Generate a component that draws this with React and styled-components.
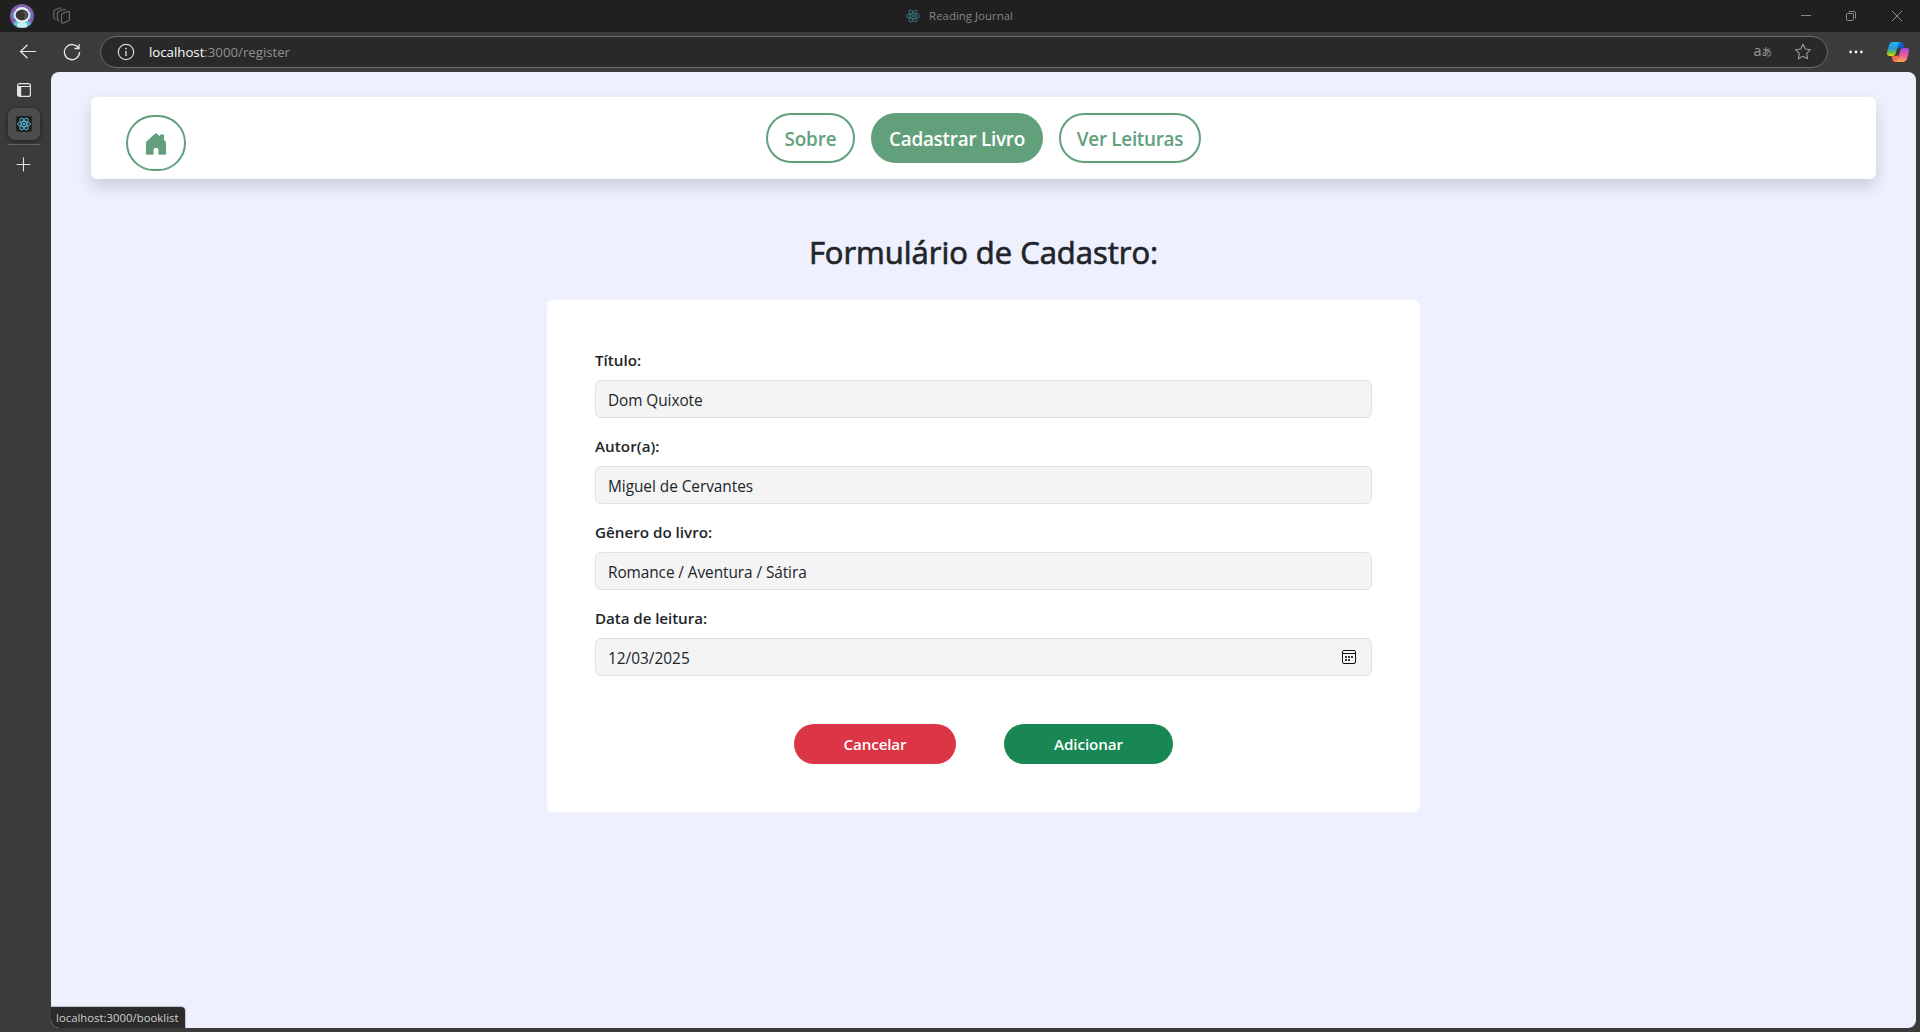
import React from "react";
import styled, { createGlobalStyle } from "styled-components";

const GlobalStyle = createGlobalStyle`
  * { box-sizing: border-box; }
  html, body { margin: 0; padding: 0; }
  body {
    font-family: "Open Sans", "Noto Sans", sans-serif;
    background: #3b3b3b;
    overflow: hidden;
  }
  svg { display: block; flex: none; }
`;

const Browser = styled.div`
  display: flex;
  flex-direction: column;
  width: 1920px;
  height: 1032px;
  background: #3b3b3b;
`;

const TitleBar = styled.header`
  display: grid;
  grid-template-columns: 1fr auto 1fr;
  align-items: center;
  height: 32px;
  background: #202020;
  flex: none;
`;

const TitleLeft = styled.div`
  display: flex;
  align-items: center;
  gap: 19px;
  padding-left: 10px;
`;

const TabTitle = styled.div`
  display: flex;
  align-items: center;
  gap: 9px;
  padding-right: 1px;
  font-size: 11.4px;
  line-height: 16px;
  letter-spacing: ${(p) => p.$spacing};
  color: #858585;
`;

const WindowControls = styled.div`
  display: flex;
  justify-content: flex-end;
  align-items: center;
  gap: 35px;
  padding-right: 17px;
`;

const Toolbar = styled.div`
  display: flex;
  align-items: center;
  height: 40px;
  flex: none;
  padding: 0 11px 0 19px;
`;

const AddressBar = styled.div`
  display: flex;
  align-items: center;
  flex: 1;
  height: 32px;
  margin: 0 21px 0 19px;
  padding: 0 15px 0 16px;
  border: 1px solid #6a6a6a;
  border-radius: 16px;
  background: #292929;
`;

const Url = styled.div`
  flex: 1;
  margin-left: 14px;
  font-size: 13.3px;
  line-height: 20px;
  letter-spacing: ${(p) => p.$spacing};
  color: #8f8f8f;
`;

const Host = styled.span`
  color: #ffffff;
`;

const Translate = styled.span`
  display: flex;
  align-items: baseline;
  margin-right: 22px;
  padding-bottom: 2px;
  font-size: 14.5px;
  line-height: 18px;
  color: #9a9a9a;
`;

const Kana = styled.span`
  font-family: "Noto Sans CJK JP", sans-serif;
  font-size: 10.5px;
  line-height: 12px;
`;

const ToolIcon = styled.div`
  margin-left: ${(p) => p.$left || "0"};
`;

const Body = styled.div`
  display: flex;
  flex: 1;
  min-height: 0;
  padding: 0 4px 4px 0;
`;

const SideTabs = styled.aside`
  display: flex;
  flex-direction: column;
  align-items: center;
  width: 51px;
  padding: 11px 4px 0 0;
`;

const ActiveTab = styled.div`
  display: flex;
  align-items: center;
  justify-content: center;
  width: 32px;
  height: 32px;
  margin: 11px 0 0 1px;
  border-radius: 7px;
  background: #4c4c4c;
  box-shadow: 0 1px 4px rgba(0, 0, 0, 0.55);
`;

const Favicon = styled.div`
  display: flex;
  align-items: center;
  justify-content: center;
  width: 16px;
  height: 16px;
  border-radius: 2px;
  background: #222222;
`;

const TabDivider = styled.div`
  width: 32px;
  height: 1px;
  margin: 4px 0 12px 1px;
  background: #5f5f5f;
`;

const Page = styled.main`
  position: relative;
  flex: 1;
  padding: 25px 40px 0;
  border-radius: 8px;
  background: #eef0fe;
  overflow: hidden;
`;

const NavCard = styled.nav`
  display: grid;
  grid-template-columns: 1fr auto 1fr;
  height: 82px;
  padding: 16px 35px 0;
  border-radius: 6px;
  background: #ffffff;
  box-shadow: 0 8px 16px rgba(0, 0, 0, 0.15);
`;

const HomeButton = styled.button`
  display: flex;
  justify-content: center;
  width: 60px;
  height: 56px;
  margin-top: 2px;
  padding: 16px 0 0;
  border: 2px solid #62a07c;
  border-radius: 28px;
  background: #ffffff;
`;

const NavLinks = styled.div`
  display: flex;
  gap: 16px;
`;

const NavLink = styled.a`
  display: flex;
  align-items: center;
  justify-content: center;
  width: ${(p) => p.$width};
  height: 50px;
  padding-top: 2px;
  border: 2px solid #62a07c;
  border-radius: 25px;
  background: ${(p) => (p.$active ? "#62a07c" : "#ffffff")};
  color: ${(p) => (p.$active ? "#ffffff" : "#62a07c")};
  font-size: 18.9px;
  font-weight: 600;
  line-height: 30px;
  letter-spacing: ${(p) => p.$spacing};
  white-space: nowrap;
`;

const Heading = styled.h2`
  margin: 54px 0 0;
  font-size: 31px;
  font-weight: 400;
  line-height: 38px;
  letter-spacing: ${(p) => p.$spacing};
  text-align: center;
  color: #212529;
  -webkit-text-stroke: 0.7px #212529;
`;

const FormCard = styled.form`
  display: flex;
  flex-direction: column;
  width: 873px;
  height: 512px;
  margin: 29px auto 0;
  padding: 48px;
  border-radius: 6px;
  background: #ffffff;
`;

const Field = styled.div`
  display: flex;
  flex-direction: column;
  gap: 8px;
  margin-bottom: 16px;
`;

const Label = styled.label`
  font-size: 15.2px;
  font-weight: 600;
  line-height: 24px;
  letter-spacing: ${(p) => p.$spacing};
  color: #212529;
`;

const InputBox = styled.div`
  display: flex;
  align-items: center;
  height: 38px;
  padding: 0 15px 0 12px;
  border: 1px solid #dee2e6;
  border-radius: 6px;
  background: #f4f4f4;
`;

const Input = styled.input`
  flex: 1;
  min-width: 0;
  height: 26px;
  padding: 2px 0 0;
  border: 0;
  outline: 0;
  background: transparent;
  font-family: inherit;
  font-size: 15.4px;
  line-height: 24px;
  letter-spacing: ${(p) => p.$spacing};
  color: #212529;
`;

const Actions = styled.div`
  display: flex;
  justify-content: center;
  gap: 48px;
  margin-top: 32px;
`;

const ActionButton = styled.button`
  width: ${(p) => p.$width};
  height: 40px;
  padding: 0;
  border: 0;
  border-radius: 20px;
  background: ${(p) => p.$color};
  color: #ffffff;
  font-family: inherit;
  font-size: 15.2px;
  font-weight: 600;
  line-height: 24px;
  letter-spacing: ${(p) => p.$spacing};
`;

const StatusBubble = styled.div`
  position: absolute;
  left: 0;
  bottom: 0;
  width: 134px;
  height: 21px;
  padding-left: 5px;
  border-radius: 0 4px 0 8px;
  background: #2b2b2b;
  box-shadow: 0 0 1px 1px rgba(0, 0, 0, 0.2);
  font-size: 11.3px;
  line-height: 21px;
  letter-spacing: ${(p) => p.$spacing};
  white-space: nowrap;
  color: #cfcfcf;
`;

const Avatar = () => (
  <svg width="24" height="24" viewBox="0 0 24 24">
    <defs>
      <clipPath id="avatarClip">
        <circle cx="12" cy="12" r="12" />
      </clipPath>
    </defs>
    <g clipPath="url(#avatarClip)">
      <rect width="24" height="24" fill="#8460b0" />
      <path d="M2 24c0-5 3-8 10-8s10 3 10 8z" fill="#62bfd6" />
      <rect x="3" y="7.500" width="18" height="7.500" rx="3" fill="#62c3d8" />
      <ellipse cx="12" cy="11" rx="7.800" ry="8" fill="#e6f4f7" />
      <ellipse cx="12" cy="11" rx="6.400" ry="5.400" fill="#3a3635" />
      <path d="M13 6.500c3 .4 4.600 2.400 4.600 4.500s-1.500 4-4 4.600c1.600-2.600 1.500-6-.6-9.100z" fill="#5a5350" />
      <rect x="7" y="19" width="10" height="4.500" rx="1.500" fill="#c8eef5" />
    </g>
  </svg>
);

const Workspaces = () => (
  <svg width="18" height="18" viewBox="0 0 18 18" fill="none" stroke="#6b6b6b" strokeWidth="1.100" strokeLinejoin="round" strokeLinecap="round">
    <path d="M9.200 6.700 14.600 4.600q1.800-.5 1.800 1v6.700q0 1-1 1.400l-5 2.200q-1.900.7-1.900-1V7.900q0-.9.7-1.200z" />
    <path d="M5.900 13.900q-1.500 0-1.500-1.300V6.200q0-1 .9-1.400l5.300-2.300q1-.3 1.500.5" />
    <path d="M2.200 12.200Q.8 12 .8 10.800V4.500q0-1 .9-1.400L6.800.9q1-.3 1.500.5" />
  </svg>
);

const Atom = ({ size, color, weight = 1.8 }) => (
  <svg width={size} height={size} viewBox="0 0 24 24" fill="none" stroke={color} strokeWidth={weight}>
    <ellipse cx="12" cy="12" rx="11" ry="4.300" />
    <ellipse cx="12" cy="12" rx="11" ry="4.300" transform="rotate(60 12 12)" />
    <ellipse cx="12" cy="12" rx="11" ry="4.300" transform="rotate(120 12 12)" />
    <circle cx="12" cy="12" r="2" fill={color} stroke="none" />
  </svg>
);

const Minimize = () => (
  <svg width="10" height="10" viewBox="0 0 10 10">
    <path d="M0 4.500h10" stroke="#8a8a8a" />
  </svg>
);

const Restore = () => (
  <svg width="10" height="10" viewBox="0 0 10 10" fill="none" stroke="#8a8a8a">
    <rect x=".5" y="2.500" width="7" height="7" rx="1" />
    <path d="M2.500.5H8q1.500 0 1.500 1.500v5.500" />
  </svg>
);

const Close = () => (
  <svg width="12" height="12" viewBox="0 0 12 12" stroke="#8a8a8a">
    <path d="M1 1l10 10M11 1 1 11" />
  </svg>
);

const Back = () => (
  <svg width="18" height="16" viewBox="0 0 18 16" fill="none" stroke="#e8e8e8" strokeWidth="1.200">
    <path d="M17 7.500H1.500M8.500.8 1.500 7.500l7 6.700" />
  </svg>
);

const Reload = () => (
  <svg width="18" height="18" viewBox="0 0 18 18" fill="none" stroke="#e8e8e8" strokeWidth="1.300">
    <path d="M11.500 5.500H16V1M15.700 5.500A7.600 7.600 0 1 0 16.600 9" />
  </svg>
);

const Info = () => (
  <svg width="18" height="18" viewBox="0 0 18 18" fill="none" stroke="#d4d4d4" strokeWidth="1.200">
    <circle cx="9" cy="9" r="7.700" />
    <path d="M9 8v5" strokeWidth="1.400" />
    <circle cx="9" cy="5.600" r=".9" fill="#d4d4d4" stroke="none" />
  </svg>
);

const Star = () => (
  <svg width="18" height="18" viewBox="0 0 18 18" fill="none" stroke="#9a9a9a" strokeWidth="1.100" strokeLinejoin="round">
    <path d="M9 1.200 11.300 6l5.200.7-3.800 3.700.9 5.400L9 13.300l-4.600 2.500.9-5.400L1.500 6.700 6.700 6z" />
  </svg>
);

const Dots = () => (
  <svg width="14" height="4" viewBox="0 0 14 4" fill="#f0f0f0">
    <circle cx="1.600" cy="2" r="1.400" />
    <circle cx="7" cy="2" r="1.400" />
    <circle cx="12.400" cy="2" r="1.400" />
  </svg>
);

const Copilot = () => (
  <svg width="22" height="20" viewBox="0 0 22 20">
    <defs>
      <linearGradient id="cpBlue" x1="0" y1="0" x2="0" y2="1">
        <stop offset="0" stopColor="#22b8f4" />
        <stop offset=".45" stopColor="#2a96d8" />
        <stop offset=".75" stopColor="#6cc04a" />
        <stop offset="1" stopColor="#f2d40c" />
      </linearGradient>
      <linearGradient id="cpPink" x1="0" y1="0" x2="0" y2="1">
        <stop offset="0" stopColor="#a04bf0" />
        <stop offset=".5" stopColor="#ec5a9a" />
        <stop offset="1" stopColor="#ffa04e" />
      </linearGradient>
      <linearGradient id="cpNavy" x1="0" y1="0" x2="1" y2="1">
        <stop offset="0" stopColor="#1479e0" />
        <stop offset="1" stopColor="#1442a8" />
      </linearGradient>
      <linearGradient id="cpRed" x1="0" y1="0" x2="1" y2="1">
        <stop offset="0" stopColor="#d9503e" />
        <stop offset="1" stopColor="#ff8a4a" />
      </linearGradient>
    </defs>
    <path d="M10 0h4q1.800 0 2.300 1.700l.9 3.300q.3 1 1.500 1H13q-1.500 0-2 1.500z" fill="url(#cpNavy)" />
    <path d="M12 20H8q-1.800 0-2.300-1.700L4.800 15q-.3-1-1.500-1H9q1.500 0 2-1.500z" fill="url(#cpRed)" />
    <path d="M5.500 0H13q-1.200.5-1.700 2.300L8.500 12q-.6 2-2.400 2H2.700Q-.5 14 .1 10.500q.5-3.200 2-7.500Q3.200 0 5.500 0z" fill="url(#cpBlue)" />
    <path d="M16.500 20H9q1.200-.5 1.700-2.300L13.500 8q.6-2 2.400-2h3.400q3.200 0 2.600 3.500-.5 3.200-2 7.500-1.100 3-3.400 3z" fill="url(#cpPink)" />
  </svg>
);

const TabPane = () => (
  <svg width="14" height="14" viewBox="0 0 14 14">
    <rect x=".6" y=".6" width="12.800" height="12.800" rx="2" fill="none" stroke="#e4e4e4" strokeWidth="1.200" />
    <path d="M1 3.500h12" stroke="#e4e4e4" strokeWidth="1" />
    <path d="M1 3.500h3.200V13H2q-1 0-1-1z" fill="#e4e4e4" />
  </svg>
);

const Plus = () => (
  <svg width="15" height="15" viewBox="0 0 15 15" stroke="#e4e4e4" strokeWidth="1.100">
    <path d="M7.500.5v14M.5 7.500h14" />
  </svg>
);

const House = () => (
  <svg width="20" height="22" viewBox="0 0 20 22" fill="#62a07c">
    <path d="M9 .7q1-.9 2 0L14 3.500V1.900q0-.4.400-.4h3.200q.4 0 .4.400V7l1.300 1.200q.7.700.7 1.500v11q0 1-1 1h-5.600q-1 0-1-1V17q0-1.700-1.400-1.900H9Q7.600 15.300 7.600 17v3.700q0 1-1 1H1q-1 0-1-1v-11q0-.8.7-1.500z" />
  </svg>
);

const Calendar = () => (
  <svg width="14" height="14" viewBox="0 0 14 14">
    <rect x=".5" y=".5" width="13" height="13" rx="1.500" fill="none" stroke="#111111" />
    <path d="M1 3.500h12" stroke="#111111" />
    <path d="M3 6h2v2H3zM6 6h2v2H6zM9 6h2v2H9zM3 9h2v2H3zM6 9h2v2H6z" fill="#3c3c3c" />
  </svg>
);

const links = [
  { text: "Sobre", width: "89px", spacing: "-0.1px" },
  { text: "Cadastrar Livro", width: "172px", spacing: "-0.25px", active: true },
  { text: "Ver Leituras", width: "142px", spacing: "-0.3px" },
];

const fields = [
  { id: "titulo", label: "Título:", value: "Dom Quixote", ls: "0", vs: "-0.08px" },
  { id: "autor", label: "Autor(a):", value: "Miguel de Cervantes", ls: "0.05px", vs: "-0.04px" },
  { id: "genero", label: "Gênero do livro:", value: "Romance / Aventura / Sátira", ls: "0", vs: "-0.08px" },
  { id: "data", label: "Data de leitura:", value: "12/03/2025", ls: "-0.08px", vs: "0", date: true },
];

export default function App() {
  return (
    <Browser>
      <GlobalStyle />
      <TitleBar>
        <TitleLeft>
          <Avatar />
          <Workspaces />
        </TitleLeft>
        <TabTitle $spacing="0.02px">
          <Atom size={14} color="#376a78" />
          <span>Reading Journal</span>
        </TabTitle>
        <WindowControls>
          <Minimize />
          <Restore />
          <Close />
        </WindowControls>
      </TitleBar>

      <Toolbar>
        <Back />
        <ToolIcon $left="26px">
          <Reload />
        </ToolIcon>
        <AddressBar>
          <Info />
          <Url $spacing="-0.04px">
            <Host>localhost</Host>:3000/register
          </Url>
          <Translate>
            a<Kana>あ</Kana>
          </Translate>
          <Star />
        </AddressBar>
        <Dots />
        <ToolIcon $left="24px">
          <Copilot />
        </ToolIcon>
      </Toolbar>

      <Body>
        <SideTabs>
          <TabPane />
          <ActiveTab>
            <Favicon>
              <Atom size={14} color="#55b9d2" weight={1.6} />
            </Favicon>
          </ActiveTab>
          <TabDivider />
          <Plus />
        </SideTabs>

        <Page>
          <NavCard>
            <HomeButton type="button" aria-label="Home">
              <House />
            </HomeButton>
            <NavLinks>
              {links.map((l) => (
                <NavLink key={l.text} $width={l.width} $active={l.active} $spacing={l.spacing}>
                  {l.text}
                </NavLink>
              ))}
            </NavLinks>
          </NavCard>

          <Heading $spacing="-0.03px">Formulário de Cadastro:</Heading>

          <FormCard>
            {fields.map((f) => (
              <Field key={f.id}>
                <Label htmlFor={f.id} $spacing={f.ls}>
                  {f.label}
                </Label>
                <InputBox>
                  <Input id={f.id} defaultValue={f.value} $spacing={f.vs} />
                  {f.date && <Calendar />}
                </InputBox>
              </Field>
            ))}
            <Actions>
              <ActionButton type="button" $width="162px" $color="#dc3545" $spacing="-0.15px">
                Cancelar
              </ActionButton>
              <ActionButton type="button" $width="169px" $color="#198754" $spacing="-0.08px">
                Adicionar
              </ActionButton>
            </Actions>
          </FormCard>

          <StatusBubble $spacing="0.03px">localhost:3000/booklist</StatusBubble>
        </Page>
      </Body>
    </Browser>
  );
}
